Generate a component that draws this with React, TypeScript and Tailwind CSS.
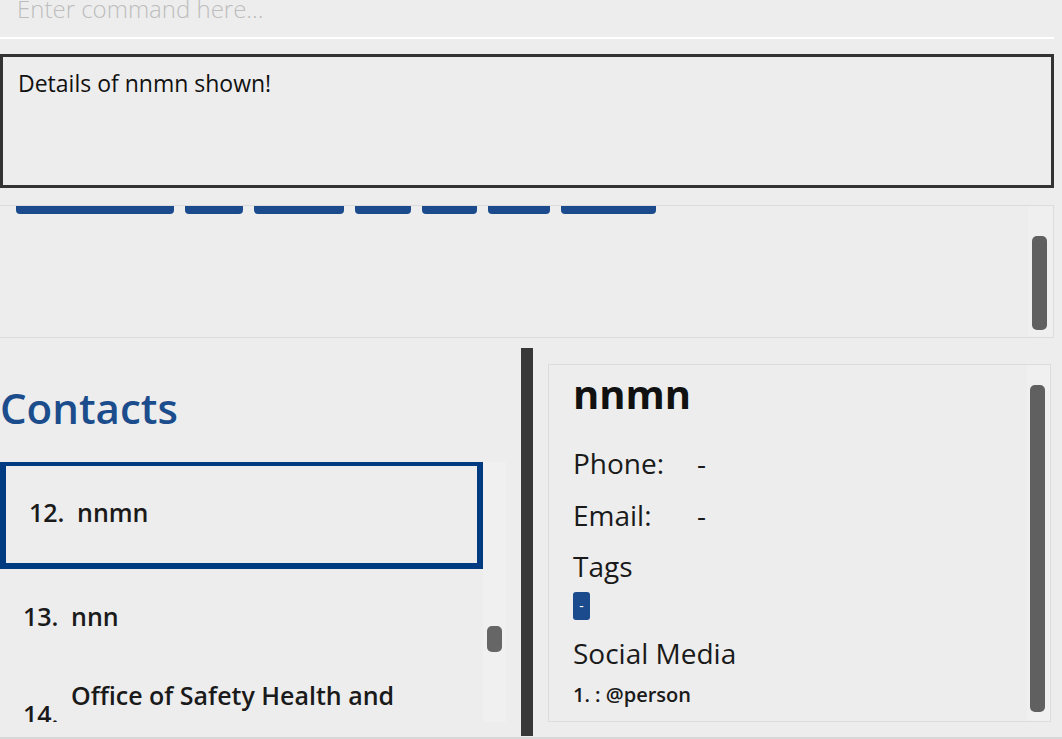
import React from "react";

const tags = [
  { w: 158, t: "Emergency Line" },
  { w: 58, t: "Police" },
  { w: 90, t: "Hospitals" },
  { w: 56, t: "Safety" },
  { w: 55, t: "Fire" },
  { w: 62, t: "Clinic" },
  { w: 95, t: "Agency" },
];

export default function App() {
  return (
    <div className="w-[1062px] h-[739px] bg-[#ededed] overflow-hidden flex flex-col font-['Open_Sans',sans-serif] text-[#1a1a1a]">
      {/* command box */}
      <div className="h-[39px] w-[1054px] shrink-0 border-b-2 border-white overflow-hidden">
        <div className="-mt-[3px] pl-[17px] text-[24px] leading-none font-light text-[#bdbdbd] whitespace-nowrap">
          Enter command here...
        </div>
      </div>

      {/* result display */}
      <div className="mt-[15px] h-[134px] w-[1054px] shrink-0 border-[3px] border-[#333333] pl-[15px] pt-[15px]">
        <div className="text-[23px] leading-none text-[#111]">Details of nnmn shown!</div>
      </div>

      {/* tags panel */}
      <div className="mt-[17px] h-[133px] w-[1054px] shrink-0 border-y border-r border-[#dcdcdc] flex overflow-hidden">
        <div className="flex-1 overflow-hidden">
          <div className="flex gap-[11px] pl-[16px] -mt-[22px]">
            {tags.map((tg) => (
              <div
                key={tg.t}
                className="h-[30px] rounded-[4px] bg-[#1b4b8d] text-white text-[15px] font-bold leading-[27px] text-center overflow-hidden whitespace-nowrap"
                style={{ width: tg.w }}
              >
                {tg.t}
              </div>
            ))}
          </div>
        </div>
        <div className="w-[25px] bg-[#efefef] pt-[30px] pl-[4px]">
          <div className="w-[15px] h-[94px] rounded-[5px] bg-[#606060]" />
        </div>
      </div>

      {/* bottom area */}
      <div className="mt-[10px] h-[388px] shrink-0 flex">
        {/* contacts */}
        <div className="w-[521px] flex flex-col">
          <div className="h-[114px] pt-[39px]">
            <div className="text-[42px] leading-none font-semibold text-[#1b4c8c]">Contacts</div>
          </div>
          <div className="h-[260px] flex">
            <div className="w-[483px] overflow-hidden flex flex-col">
              <div className="h-[107px] shrink-0 border-[6px] border-t-4 border-[#003a80] flex items-center pl-[23px] pb-[4px] text-[25px] font-semibold leading-none">
                <span className="w-[48px]">12.</span>
                <span>nnmn</span>
              </div>
              <div className="h-[101px] shrink-0 flex items-center pl-[23px] pb-[6px] text-[25px] font-semibold leading-none">
                <span className="w-[48px]">13.</span>
                <span>nnn</span>
              </div>
              <div className="shrink-0 flex items-center pl-[23px] pt-[7px] text-[25px] font-semibold">
                <span className="w-[48px] pt-[2px] leading-none">14.</span>
                <span className="w-[360px] leading-[36px]">Office of Safety Health and Environment</span>
              </div>
            </div>
            <div className="w-[23px] bg-[#f0f0f0] pt-[164px] pl-[4px]">
              <div className="w-[15px] h-[26px] rounded-[5px] bg-[#666666]" />
            </div>
          </div>
        </div>

        {/* divider */}
        <div className="w-[12px] bg-[#383838]" />

        {/* details */}
        <div className="pl-[15px] pt-[16px]">
          <div className="w-[503px] h-[358px] border border-[#dcdcdc] flex overflow-hidden">
            <div className="flex-1 pl-[24px] flex flex-col items-start">
              <div className="mt-[9px] text-[40px] leading-none font-bold text-[#111]">nnmn</div>
              <div className="mt-[35px] flex text-[28px] leading-none">
                <span className="w-[124px]">Phone:</span>
                <span>-</span>
              </div>
              <div className="mt-[24px] flex text-[28px] leading-none">
                <span className="w-[124px]">Email:</span>
                <span>-</span>
              </div>
              <div className="mt-[23px] text-[28px] leading-none">Tags</div>
              <div className="mt-[12px] h-[28px] w-[17px] rounded-[3px] bg-[#1b4b8d] text-white text-[14px] leading-[28px] text-center">
                -
              </div>
              <div className="mt-[19px] text-[28px] leading-none">Social Media</div>
              <div className="mt-[18px] text-[20px] leading-none font-semibold">1. : @person</div>
            </div>
            <div className="w-[23px] bg-[#f0f0f0] pt-[20px] pl-[3px]">
              <div className="w-[15px] h-[327px] rounded-[5px] bg-[#606060]" />
            </div>
          </div>
        </div>
      </div>
      <div className="mt-[1px] h-[2px] bg-[#d8d8d8] shrink-0" />
    </div>
  );
}
